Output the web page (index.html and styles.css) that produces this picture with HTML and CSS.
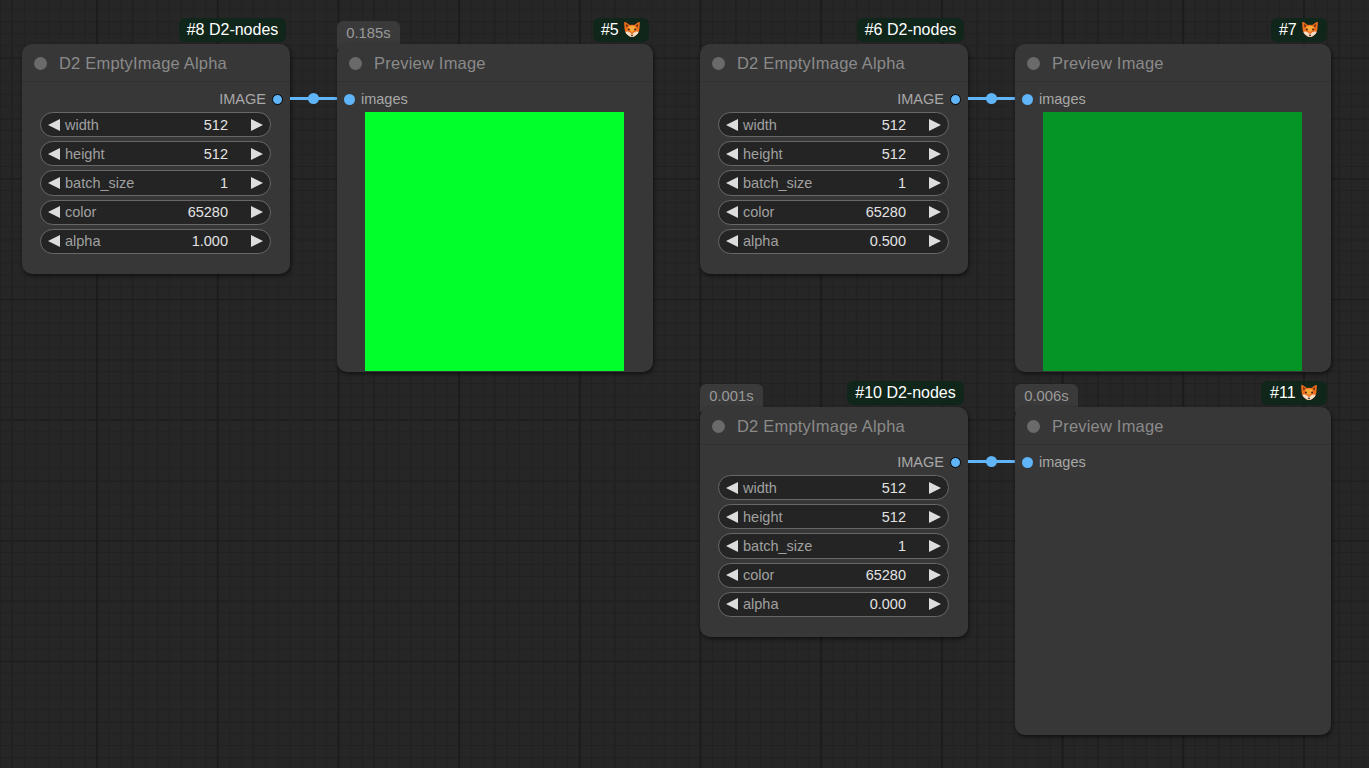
FILE: index.html
```html
<!DOCTYPE html>
<html lang="en">
<head>
  <meta charset="UTF-8" />
  <meta name="viewport" content="width=device-width, initial-scale=1.0" />
  <title>D2 EmptyImage Alpha workflow</title>
  <link rel="stylesheet" href="styles.css">
</head>
<body>
  <svg class="defs" width="0" height="0" aria-hidden="true">
    <symbol id="fox" viewBox="0 0 32 32">
      <path fill="#ee6f1c" d="M2 3 Q2 1 5 2 L12 7 Q16 6 20 7 L27 2 Q30 1 30 3 L29 16 Q28 22 22 26 Q16 31 10 26 Q4 22 3 16 Z"/>
      <path fill="#7a3412" d="M5 5 L10 8.5 L6 12 Z M27 5 L22 8.5 L26 12 Z"/>
      <path fill="#f9a63a" d="M9 10 Q16 7 23 10 L21 16 L16 20 L11 16 Z"/>
      <path fill="#f6dcc4" d="M4 19 Q9 18 12 20 L16 23.5 L20 20 Q23 18 28 19 Q27 23 22 26 Q16 31 10 26 Q5 23 4 19 Z"/>
      <circle fill="#2a1a14" cx="10.5" cy="15" r="1.6"/>
      <circle fill="#2a1a14" cx="21.5" cy="15" r="1.6"/>
      <path fill="#2a1a14" d="M13.5 24.5 H18.5 L16 27.5 Z"/>
    </symbol>
  </svg>

  <!-- first row, left pair -->
  <div class="badge badge-8">#8 D2-nodes</div>
  <div class="node node-8">
    <div class="node-title"><span class="title-dot"></span>D2 EmptyImage Alpha</div>
    <div class="node-body">
      <div class="slot slot-out">IMAGE<span class="dot dot-out"></span></div>
      <div class="widgets">
        <div class="widget"><i class="arrow-l"></i><span class="w-label">width</span><span class="w-value">512</span><i class="arrow-r"></i></div>
        <div class="widget"><i class="arrow-l"></i><span class="w-label">height</span><span class="w-value">512</span><i class="arrow-r"></i></div>
        <div class="widget"><i class="arrow-l"></i><span class="w-label">batch_size</span><span class="w-value">1</span><i class="arrow-r"></i></div>
        <div class="widget"><i class="arrow-l"></i><span class="w-label">color</span><span class="w-value">65280</span><i class="arrow-r"></i></div>
        <div class="widget"><i class="arrow-l"></i><span class="w-label">alpha</span><span class="w-value">1.000</span><i class="arrow-r"></i></div>
      </div>
    </div>
  </div>
  <div class="link link-top-left"></div>

  <div class="time time-5">0.185s</div>
  <div class="badge badge-5">#5 <svg class="fox"><use href="#fox"/></svg></div>
  <div class="node preview node-5">
    <div class="node-title"><span class="title-dot"></span>Preview Image</div>
    <div class="node-body">
      <div class="slot slot-in"><span class="dot dot-in"></span>images</div>
      <div class="image image-full"></div>
    </div>
  </div>

  <!-- first row, right pair -->
  <div class="badge badge-6">#6 D2-nodes</div>
  <div class="node node-6">
    <div class="node-title"><span class="title-dot"></span>D2 EmptyImage Alpha</div>
    <div class="node-body">
      <div class="slot slot-out">IMAGE<span class="dot dot-out"></span></div>
      <div class="widgets">
        <div class="widget"><i class="arrow-l"></i><span class="w-label">width</span><span class="w-value">512</span><i class="arrow-r"></i></div>
        <div class="widget"><i class="arrow-l"></i><span class="w-label">height</span><span class="w-value">512</span><i class="arrow-r"></i></div>
        <div class="widget"><i class="arrow-l"></i><span class="w-label">batch_size</span><span class="w-value">1</span><i class="arrow-r"></i></div>
        <div class="widget"><i class="arrow-l"></i><span class="w-label">color</span><span class="w-value">65280</span><i class="arrow-r"></i></div>
        <div class="widget"><i class="arrow-l"></i><span class="w-label">alpha</span><span class="w-value">0.500</span><i class="arrow-r"></i></div>
      </div>
    </div>
  </div>
  <div class="link link-top-right"></div>

  <div class="badge badge-7">#7 <svg class="fox"><use href="#fox"/></svg></div>
  <div class="node preview node-7">
    <div class="node-title"><span class="title-dot"></span>Preview Image</div>
    <div class="node-body">
      <div class="slot slot-in"><span class="dot dot-in"></span>images</div>
      <div class="image image-half"></div>
    </div>
  </div>

  <!-- second row -->
  <div class="time time-10">0.001s</div>
  <div class="badge badge-10">#10 D2-nodes</div>
  <div class="node node-10">
    <div class="node-title"><span class="title-dot"></span>D2 EmptyImage Alpha</div>
    <div class="node-body">
      <div class="slot slot-out">IMAGE<span class="dot dot-out"></span></div>
      <div class="widgets">
        <div class="widget"><i class="arrow-l"></i><span class="w-label">width</span><span class="w-value">512</span><i class="arrow-r"></i></div>
        <div class="widget"><i class="arrow-l"></i><span class="w-label">height</span><span class="w-value">512</span><i class="arrow-r"></i></div>
        <div class="widget"><i class="arrow-l"></i><span class="w-label">batch_size</span><span class="w-value">1</span><i class="arrow-r"></i></div>
        <div class="widget"><i class="arrow-l"></i><span class="w-label">color</span><span class="w-value">65280</span><i class="arrow-r"></i></div>
        <div class="widget"><i class="arrow-l"></i><span class="w-label">alpha</span><span class="w-value">0.000</span><i class="arrow-r"></i></div>
      </div>
    </div>
  </div>
  <div class="link link-bottom"></div>

  <div class="time time-11">0.006s</div>
  <div class="badge badge-11">#11 <svg class="fox"><use href="#fox"/></svg></div>
  <div class="node preview node-11">
    <div class="node-title"><span class="title-dot"></span>Preview Image</div>
    <div class="node-body">
      <div class="slot slot-in"><span class="dot dot-in"></span>images</div>
    </div>
  </div>
</body>
</html>
```

FILE: styles.css
```css
* {
  box-sizing: border-box;
  margin: 0;
  padding: 0;
}

html, body {
  height: 100%;
  overflow: hidden;
}

body {
  position: relative;
  font-family: "Liberation Sans", Arial, sans-serif;
  background-color: #262626;
  /* canvas grid: big lines, mid lines, then small cells */
  background-image:
    linear-gradient(to right, #1c1c1c 0, #1c1c1c 2px, transparent 2px),
    linear-gradient(to right, #202020 0, #202020 1px, transparent 1px),
    linear-gradient(to bottom, #1c1c1c 0, #1c1c1c 1px, transparent 1px),
    linear-gradient(to bottom, #202020 0, #202020 1px, transparent 1px),
    linear-gradient(to right, #212121 0, #212121 1px, transparent 1px),
    linear-gradient(to bottom, #212121 0, #212121 1px, transparent 1px);
  background-size:
    120.7px 120.7px,
    120.7px 120.7px,
    120.7px 120.7px,
    120.7px 120.7px,
    12.07px 12.07px,
    12.07px 12.07px;
  background-position:
    -24.6px 0,
    10.8px 0,
    0 57.8px,
    0 -1.8px,
    0.2px 0,
    0 9.2px;
}

.defs {
  position: absolute;
}

/* nodes sit on a free canvas */
.node {
  position: absolute;
  width: 268px;
  height: 230px;
  background: #373737;
  border-radius: 10px;
  box-shadow: 1px 2px 4px rgba(0, 0, 0, 0.55);
}

.preview {
  width: 316px;
  height: 328px;
}

.node-8 { left: 22px; top: 44px; }
.node-5 { left: 337px; top: 44px; }
.node-6 { left: 700px; top: 44px; }
.node-7 { left: 1015px; top: 44px; }
.node-10 { left: 700px; top: 407px; }
.node-11 { left: 1015px; top: 407px; }

.node-title {
  display: flex;
  align-items: center;
  gap: 12px;
  height: 38px;
  padding: 1px 0 0 12px;
  border-bottom: 1px solid #313131;
  font-size: 16.5px;
  letter-spacing: 0.2px;
  color: #8a8a8a;
}

.title-dot {
  width: 13px;
  height: 13px;
  border-radius: 50%;
  background: #6a6a6a;
}

.node-body {
  padding-top: 5px;
}

.slot {
  display: flex;
  align-items: center;
  height: 24px;
  font-size: 14.5px;
  color: #a8a8a8;
}

.slot-out {
  justify-content: flex-end;
  padding-right: 7px;
  gap: 6px;
}

.slot-in {
  padding-left: 7px;
  gap: 6px;
}

.dot {
  border-radius: 50%;
  background: #60b4f8;
}

.dot-out {
  width: 11px;
  height: 11px;
  border: 1px solid #000;
}

.dot-in {
  width: 11px;
  height: 11px;
}

.widgets {
  display: flex;
  flex-direction: column;
  gap: 4px;
  margin: 1px 19px 0 18px;
}

.widget {
  display: flex;
  align-items: center;
  height: 25.2px;
  padding: 0 7px 0 7px;
  border: 1px solid #686868;
  border-radius: 13px;
  background: #242424;
  font-size: 14.5px;
}

.w-label {
  margin-left: 5px;
  color: #a0a0a0;
}

.w-value {
  margin-left: auto;
  margin-right: 23px;
  color: #e2e2e2;
}

.arrow-l, .arrow-r {
  width: 0;
  height: 0;
  border-top: 6px solid transparent;
  border-bottom: 6px solid transparent;
}

.arrow-l {
  border-right: 12px solid #ddd;
}

.arrow-r {
  border-left: 12px solid #ddd;
}

.image {
  width: 259px;
  height: 259px;
  margin: 1px 0 0 28px;
}

.image-full {
  background: #00ff2b;
}

.image-half {
  background: #049526;
}

/* tags on top of the nodes */
.badge {
  position: absolute;
  display: flex;
  align-items: center;
  justify-content: center;
  height: 24px;
  padding-bottom: 1px;
  border-radius: 6px;
  background: #10261a;
  color: #fff;
  font-size: 16px;
  white-space: pre;
}

.badge-8 { left: 179px; top: 18px; width: 107px; }
.badge-5 { left: 593px; top: 18px; width: 56px; }
.badge-6 { left: 857px; top: 18px; width: 107px; }
.badge-7 { left: 1271px; top: 18px; width: 56px; }
.badge-10 { left: 847px; top: 381px; width: 117px; }
.badge-11 { left: 1261px; top: 381px; width: 66px; }

.fox {
  width: 18px;
  height: 18px;
}

.time {
  position: absolute;
  width: 63px;
  height: 28px;
  padding-top: 4px;
  border-radius: 6px 6px 0 0;
  background: #3a3a3a;
  color: #999;
  font-size: 14.8px;
  text-align: center;
}

.time-5 { left: 337px; top: 21px; }
.time-10 { left: 700px; top: 384px; }
.time-11 { left: 1015px; top: 384px; }

/* connection between output and input */
.link {
  position: absolute;
  width: 47px;
  height: 3px;
  background: #60b4f8;
}

.link::after {
  content: "";
  position: absolute;
  left: 18px;
  top: -4px;
  width: 11px;
  height: 11px;
  border-radius: 50%;
  background: #60b4f8;
}

.link-top-left { left: 290px; top: 96.5px; }
.link-top-right { left: 968px; top: 96.5px; }
.link-bottom { left: 968px; top: 459.5px; }
```
